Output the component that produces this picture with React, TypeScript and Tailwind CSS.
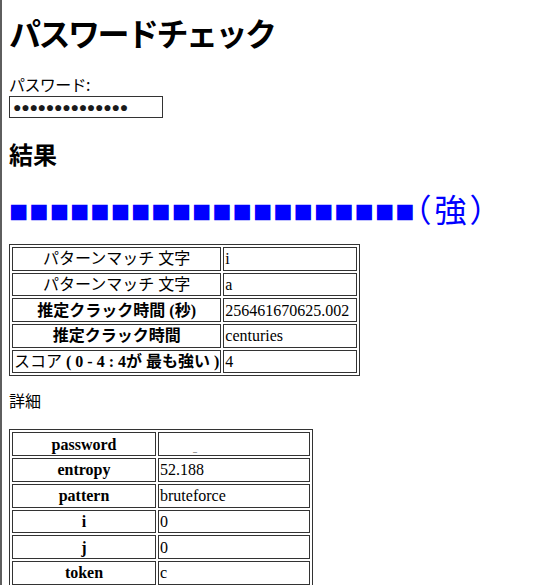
import React from "react";

const jp = "font-['Noto_Sans_CJK_JP',sans-serif]";
const cell = "border border-[#333] p-[1px] h-[23.7px] align-middle";

// rows of the summary table: [label, value, bold]
const summary: [React.ReactNode, string, boolean][] = [
  ["パターンマッチ 文字", "i", false],
  ["パターンマッチ 文字", "a", false],
  ["推定クラック時間 (秒)", "256461670625.002", true],
  ["推定クラック時間", "centuries", true],
  [
    <>
      <span className="font-normal">スコア</span> ( 0 - 4 : 4が 最も強い )
    </>,
    "4",
    true,
  ],
];

const detail: [string, React.ReactNode][] = [
  ["password", <span className="pl-[33px] text-[8px] leading-none align-bottom">_</span>],
  ["entropy", "52.188"],
  ["pattern", "bruteforce"],
  ["i", "0"],
  ["j", "0"],
  ["token", "c"],
];

export default function App() {
  return (
    <div className="min-h-screen bg-white border-l-2 border-[#5e5e5e] pl-[7px] text-black overflow-hidden">
      <h1 className={`${jp} mt-[14px] text-[32px] leading-[37px] font-bold tracking-[-2.5px]`}>
        パスワードチェック
      </h1>

      <label className={`${jp} block mt-[23px] text-[16px] leading-[20px] tracking-[-0.6px]`}>
        パスワード:
      </label>
      <input
        readOnly
        value="●●●●●●●●●●●●●●"
        className="block mt-[2px] h-[22px] w-[154px] border border-[#333] px-[3px] text-[14px] tracking-[-0.25px] text-[#1a1a1a] font-['Liberation_Sans',sans-serif] outline-none"
      />

      <h2 className={`${jp} mt-[22px] text-[24px] leading-[28px] font-bold`}>結果</h2>

      {/* strength meter */}
      <div className="mt-[20px] h-[40px] leading-[40px] text-[#0000ff] whitespace-nowrap">
        <span className="font-['Liberation_Sans',sans-serif] text-[32px] tracking-[1px]">
          ■■■■■■■■■■■■■■■■■■■■
        </span>
        <span className={`${jp} text-[32px] tracking-[3px] [font-feature-settings:'halt']`}>（強）</span>
      </div>

      <table className="mt-[16px] border-separate border-spacing-[2px] border border-[#333] font-['Liberation_Serif','Noto_Sans_CJK_JP',serif] text-[16px] leading-[19px]">
        <tbody>
          {summary.map(([label, value, bold], i) => (
            <tr key={i}>
              <th className={`${cell} w-[206px] text-center whitespace-nowrap ${bold ? "font-bold" : "font-normal"}`}>
                {label}
              </th>
              <td className={`${cell} w-[134px] text-left whitespace-nowrap`}>{value}</td>
            </tr>
          ))}
        </tbody>
      </table>

      <p className={`${jp} mt-[14px] text-[16px] leading-[20px]`}>詳細</p>

      <table className="mt-[19px] border-separate border-spacing-[2px] border border-[#333] font-['Liberation_Serif',serif] text-[16px] leading-[19px]">
        <tbody>
          {detail.map(([key, value]) => (
            <tr key={key}>
              <th className={`${cell} w-[144px] text-center font-bold`}>{key}</th>
              <td className={`${cell} w-[152px] text-left`}>{value}</td>
            </tr>
          ))}
        </tbody>
      </table>
    </div>
  );
}
